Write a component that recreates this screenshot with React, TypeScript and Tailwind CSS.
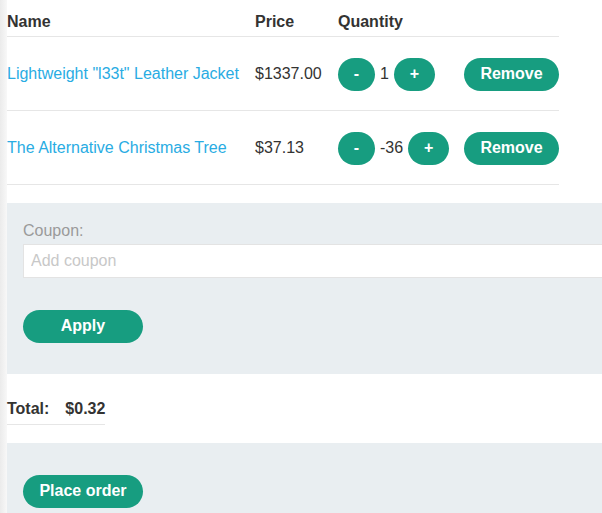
export default function App() {
  const items = [
    { name: 'Lightweight "l33t" Leather Jacket', price: "$1337.00", qty: 1 },
    { name: "The Alternative Christmas Tree", price: "$37.13", qty: -36 },
  ];

  return (
    <div className="flex min-h-[513px] w-[602px] overflow-hidden bg-white font-['Liberation_Sans',Arial,sans-serif] text-[16px] text-[#333332]">
      <div className="w-[7px] shrink-0 bg-gradient-to-r from-[#ebebeb] to-[#f8f8f8]" />
      <div className="flex-1 min-w-0">
        <table className="w-[552px] border-collapse">
          <thead>
            <tr className="h-[36px] border-b border-[#e6e6e6]">
              <th className="w-[248px] pt-[8px] text-left font-bold">Name</th>
              <th className="w-[83px] pt-[8px] text-left font-bold">Price</th>
              <th className="w-[126px] pt-[8px] text-left font-bold">Quantity</th>
              <th />
            </tr>
          </thead>
          <tbody>
            {items.map((item) => (
              <tr key={item.name} className="h-[74px] border-b border-[#e6e6e6]">
                <td className="pt-[2px]">
                  <a className="text-[#29ace3]">{item.name}</a>
                </td>
                <td className="pt-[2px]">{item.price}</td>
                <td className="pt-[2px]">
                  <div className="flex items-center gap-[5px]">
                    <button className="h-[33px] w-[37px] rounded-full bg-[#179d80] font-bold text-white">-</button>
                    <span>{item.qty}</span>
                    <button className="h-[33px] w-[41px] rounded-full bg-[#179d80] font-bold text-white">+</button>
                  </div>
                </td>
                <td className="pt-[2px] text-right">
                  <button className="h-[33px] w-[95px] rounded-full bg-[#179d80] font-bold text-white">Remove</button>
                </td>
              </tr>
            ))}
          </tbody>
        </table>

        <div className="mt-[18px] h-[171px] bg-[#e9eef1] pl-[16px] pt-[16px]">
          <label className="block text-[#9a9a9a]">Coupon:</label>
          <input
            placeholder="Add coupon"
            className="mt-[1px] block h-[34px] w-[620px] border border-[#e3e3e3] bg-white px-[7px] text-[16px] outline-none placeholder:text-[#c8c8c8]"
          />
          <button className="mt-[32px] h-[33px] w-[120px] rounded-full bg-[#179d80] font-bold text-white">Apply</button>
        </div>

        <div className="mt-[23px] flex w-[98px] gap-[16px] border-b border-[#e6e6e6] pb-[3px] font-bold">
          <span>Total:</span>
          <span>$0.32</span>
        </div>

        <div className="mt-[18px] h-[80px] bg-[#e9eef1] pl-[16px] pt-[32px]">
          <button className="h-[33px] w-[120px] rounded-full bg-[#179d80] font-bold text-white">Place order</button>
        </div>
      </div>
    </div>
  );
}
